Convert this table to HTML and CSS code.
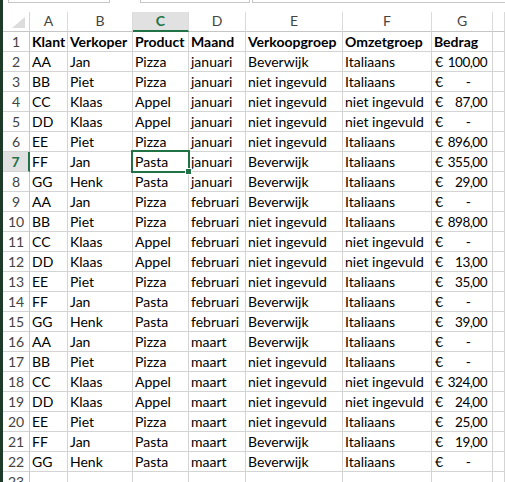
FILE: index.html
```html
<!DOCTYPE html>
<html lang="nl">
<head>
<meta charset="utf-8">
<link rel="stylesheet" href="styles.css">
</head>
<body>
<div class="app">
  <div class="edge"></div>
  <div class="main">
    <div class="toolbar">
      <div class="box namebox"></div>
      <div class="box fxbox"></div>
      <div class="box formula"></div>
    </div>
    <div class="sheet">
      <div class="corner"><span class="tri"></span></div>
      <div class="ch">A</div><div class="ch">B</div><div class="ch sel">C</div><div class="ch">D</div><div class="ch">E</div><div class="ch">F</div><div class="ch">G</div><div class="ch"></div>

      <div class="rh">1</div><div class="c b">Klant</div><div class="c b">Verkoper</div><div class="c b">Product</div><div class="c b">Maand</div><div class="c b">Verkoopgroep</div><div class="c b">Omzetgroep</div><div class="c b">Bedrag</div><div class="c"></div>
      <div class="rh">2</div><div class="c">AA</div><div class="c">Jan</div><div class="c">Pizza</div><div class="c">januari</div><div class="c">Beverwijk</div><div class="c">Italiaans</div><div class="c cur"><span>€</span><span class="num">100,00</span></div><div class="c"></div>
      <div class="rh">3</div><div class="c">BB</div><div class="c">Piet</div><div class="c">Pizza</div><div class="c">januari</div><div class="c">niet ingevuld</div><div class="c">Italiaans</div><div class="c cur"><span>€</span><span class="dash">-</span></div><div class="c"></div>
      <div class="rh">4</div><div class="c">CC</div><div class="c">Klaas</div><div class="c">Appel</div><div class="c">januari</div><div class="c">niet ingevuld</div><div class="c">niet ingevuld</div><div class="c cur"><span>€</span><span class="num">87,00</span></div><div class="c"></div>
      <div class="rh">5</div><div class="c">DD</div><div class="c">Klaas</div><div class="c">Appel</div><div class="c">januari</div><div class="c">niet ingevuld</div><div class="c">niet ingevuld</div><div class="c cur"><span>€</span><span class="dash">-</span></div><div class="c"></div>
      <div class="rh">6</div><div class="c">EE</div><div class="c">Piet</div><div class="c">Pizza</div><div class="c">januari</div><div class="c">niet ingevuld</div><div class="c">Italiaans</div><div class="c cur"><span>€</span><span class="num">896,00</span></div><div class="c"></div>
      <div class="rh active">7</div><div class="c">FF</div><div class="c">Jan</div><div class="c cell-active">Pasta<span class="handle"></span></div><div class="c">januari</div><div class="c">Beverwijk</div><div class="c">Italiaans</div><div class="c cur"><span>€</span><span class="num">355,00</span></div><div class="c"></div>
      <div class="rh">8</div><div class="c">GG</div><div class="c">Henk</div><div class="c">Pasta</div><div class="c">januari</div><div class="c">Beverwijk</div><div class="c">Italiaans</div><div class="c cur"><span>€</span><span class="num">29,00</span></div><div class="c"></div>
      <div class="rh">9</div><div class="c">AA</div><div class="c">Jan</div><div class="c">Pizza</div><div class="c">februari</div><div class="c">Beverwijk</div><div class="c">Italiaans</div><div class="c cur"><span>€</span><span class="dash">-</span></div><div class="c"></div>
      <div class="rh">10</div><div class="c">BB</div><div class="c">Piet</div><div class="c">Pizza</div><div class="c">februari</div><div class="c">niet ingevuld</div><div class="c">Italiaans</div><div class="c cur"><span>€</span><span class="num">898,00</span></div><div class="c"></div>
      <div class="rh">11</div><div class="c">CC</div><div class="c">Klaas</div><div class="c">Appel</div><div class="c">februari</div><div class="c">niet ingevuld</div><div class="c">niet ingevuld</div><div class="c cur"><span>€</span><span class="dash">-</span></div><div class="c"></div>
      <div class="rh">12</div><div class="c">DD</div><div class="c">Klaas</div><div class="c">Appel</div><div class="c">februari</div><div class="c">niet ingevuld</div><div class="c">niet ingevuld</div><div class="c cur"><span>€</span><span class="num">13,00</span></div><div class="c"></div>
      <div class="rh">13</div><div class="c">EE</div><div class="c">Piet</div><div class="c">Pizza</div><div class="c">februari</div><div class="c">niet ingevuld</div><div class="c">Italiaans</div><div class="c cur"><span>€</span><span class="num">35,00</span></div><div class="c"></div>
      <div class="rh">14</div><div class="c">FF</div><div class="c">Jan</div><div class="c">Pasta</div><div class="c">februari</div><div class="c">Beverwijk</div><div class="c">Italiaans</div><div class="c cur"><span>€</span><span class="dash">-</span></div><div class="c"></div>
      <div class="rh">15</div><div class="c">GG</div><div class="c">Henk</div><div class="c">Pasta</div><div class="c">februari</div><div class="c">Beverwijk</div><div class="c">Italiaans</div><div class="c cur"><span>€</span><span class="num">39,00</span></div><div class="c"></div>
      <div class="rh">16</div><div class="c">AA</div><div class="c">Jan</div><div class="c">Pizza</div><div class="c">maart</div><div class="c">Beverwijk</div><div class="c">Italiaans</div><div class="c cur"><span>€</span><span class="dash">-</span></div><div class="c"></div>
      <div class="rh">17</div><div class="c">BB</div><div class="c">Piet</div><div class="c">Pizza</div><div class="c">maart</div><div class="c">niet ingevuld</div><div class="c">Italiaans</div><div class="c cur"><span>€</span><span class="dash">-</span></div><div class="c"></div>
      <div class="rh">18</div><div class="c">CC</div><div class="c">Klaas</div><div class="c">Appel</div><div class="c">maart</div><div class="c">niet ingevuld</div><div class="c">niet ingevuld</div><div class="c cur"><span>€</span><span class="num">324,00</span></div><div class="c"></div>
      <div class="rh">19</div><div class="c">DD</div><div class="c">Klaas</div><div class="c">Appel</div><div class="c">maart</div><div class="c">niet ingevuld</div><div class="c">niet ingevuld</div><div class="c cur"><span>€</span><span class="num">24,00</span></div><div class="c"></div>
      <div class="rh">20</div><div class="c">EE</div><div class="c">Piet</div><div class="c">Pizza</div><div class="c">maart</div><div class="c">niet ingevuld</div><div class="c">Italiaans</div><div class="c cur"><span>€</span><span class="num">25,00</span></div><div class="c"></div>
      <div class="rh">21</div><div class="c">FF</div><div class="c">Jan</div><div class="c">Pasta</div><div class="c">maart</div><div class="c">Beverwijk</div><div class="c">Italiaans</div><div class="c cur"><span>€</span><span class="num">19,00</span></div><div class="c"></div>
      <div class="rh">22</div><div class="c">GG</div><div class="c">Henk</div><div class="c">Pasta</div><div class="c">maart</div><div class="c">Beverwijk</div><div class="c">Italiaans</div><div class="c cur"><span>€</span><span class="dash">-</span></div><div class="c"></div>
      <div class="rh">23</div><div class="c"></div><div class="c"></div><div class="c"></div><div class="c"></div><div class="c"></div><div class="c"></div><div class="c"></div><div class="c"></div>
    </div>
  </div>
</div>
</body>
</html>
```
FILE: styles.css
```css
* { box-sizing: border-box; }
html, body { margin: 0; padding: 0; background: #fff; }
body { width: 505px; height: 482px; overflow: hidden; font-family: Lato, "Open Sans", sans-serif; }

.app { display: flex; height: 482px; }
.edge { width: 3px; flex: none; background: #1e3b29; }
.main { flex: 1; display: flex; flex-direction: column; min-width: 0; }

.toolbar { height: 12px; flex: none; display: flex; align-items: flex-start; }
.box { height: 3px; border: 1px solid #c6c6c6; border-top: none; }
.namebox { margin-left: 5px; width: 102px; }
.fxbox { margin-left: 30px; width: 110px; }
.formula { margin-left: 2px; flex: 1; border-right: none; }

.sheet {
  display: grid;
  grid-template-columns: 27px 38px 65px 56px 57px 97px 89px 61px 1fr;
  grid-auto-rows: 20px;
  font-size: 14px;
  line-height: 19px;
  color: #000;
}

.corner { border-right: 1px solid #d4d4d4; border-bottom: 1px solid #c6c6c6; position: relative; }
.tri {
  position: absolute; right: 4px; bottom: 3px;
  width: 0; height: 0;
  border-left: 13px solid transparent;
  border-bottom: 11px solid #dcdcdc;
}

.ch {
  border-right: 1px solid #dadada;
  border-bottom: 1px solid #c6c6c6;
  text-align: center;
  color: #444;
  line-height: 18px;
}
.ch.sel {
  background: #e1e1e1;
  color: #217346;
  font-weight: 700;
  border-bottom: 2px solid #217346;
  line-height: 18px;
}

.rh {
  border-right: 1px solid #c6c6c6;
  border-bottom: 1px solid #d4d4d4;
  text-align: center;
  color: #444;
}
.rh.active {
  background: #e1e1e1;
  color: #217346;
  font-weight: 700;
  border-right: 2px solid #217346;
}

.c {
  border-right: 1px solid #d4d4d4;
  border-bottom: 1px solid #d4d4d4;
  padding-left: 2px;
  white-space: nowrap;
  overflow: visible;
}
.c.b { font-weight: 700; }

.cur { display: flex; justify-content: space-between; align-items: baseline; padding-left: 3px; padding-right: 5px; }
.cur .num { font-size: 13.5px; letter-spacing: -0.5px; }
.cur .dash { padding-right: 16px; }

.cell-active { position: relative; }
.cell-active::before {
  content: "";
  position: absolute;
  left: -2px; top: -2px; right: -2px; bottom: -2px;
  border: 2px solid #217346;
  pointer-events: none;
}
.handle {
  position: absolute;
  right: -4px; bottom: -4px;
  width: 7px; height: 7px;
  background: #217346;
  border: 1px solid #fff;
  z-index: 2;
}
```
